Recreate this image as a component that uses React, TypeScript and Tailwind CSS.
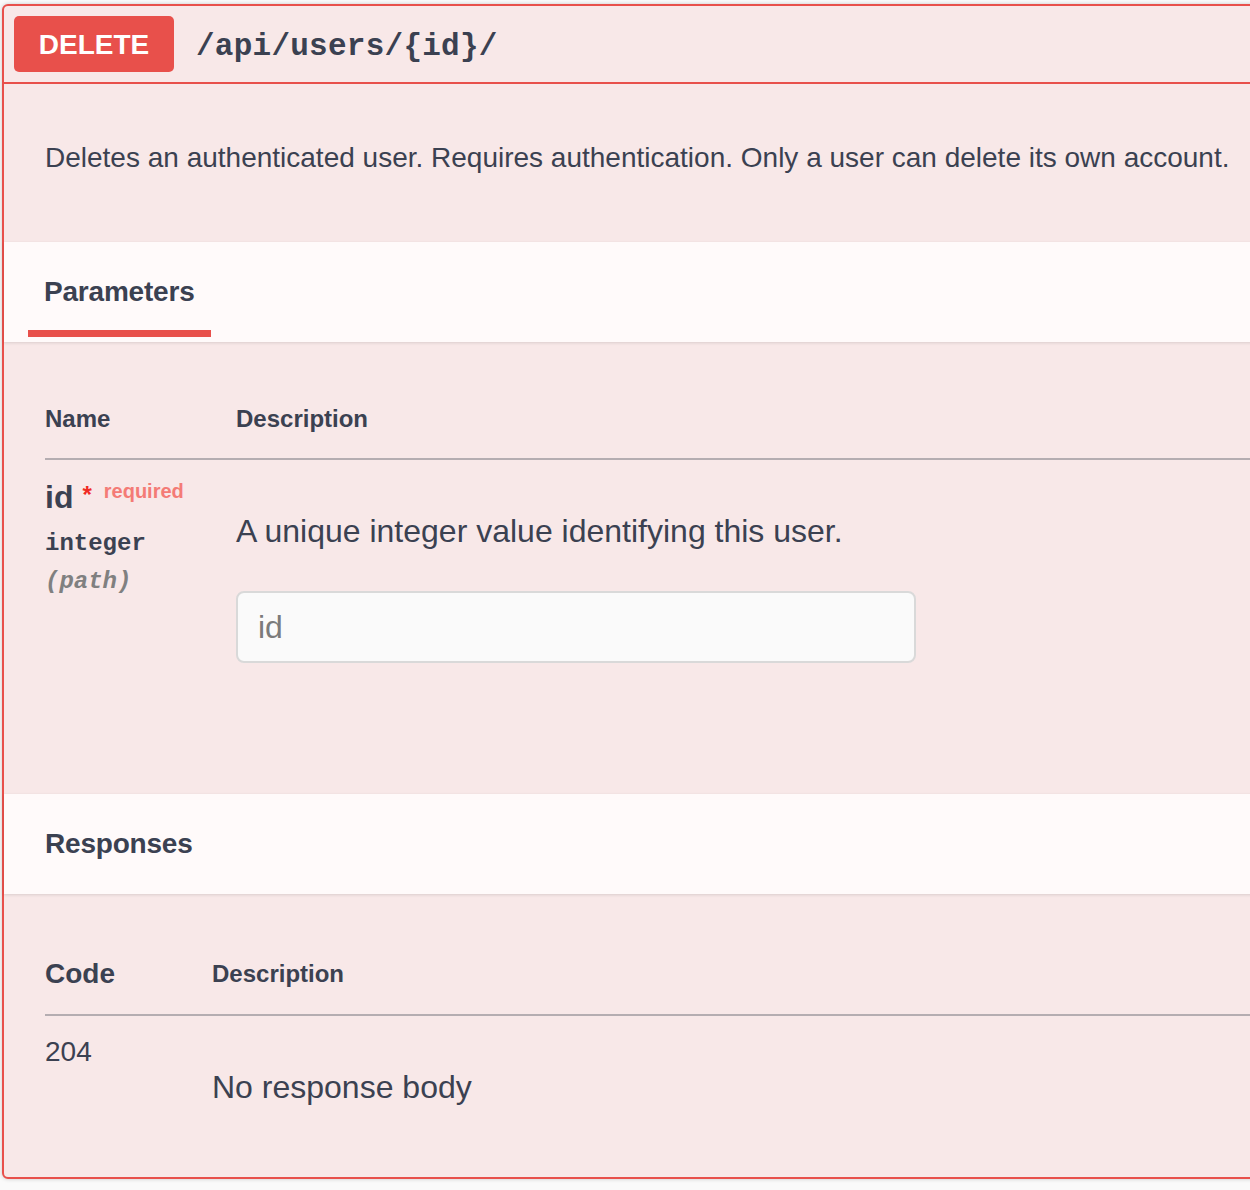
import React from 'react';

const sans = "font-['Liberation_Sans',Arial,sans-serif]";
const mono = "font-['Liberation_Mono','Courier_New',monospace]";

const SectionBar = ({ title, tab }: { title: string; tab?: boolean }) => (
  <div className="h-[100px] bg-[#fffafa] shadow-[0_1px_3px_rgba(0,0,0,0.12)] flex items-stretch">
    {tab ? (
      <div className="ml-[24px] flex flex-col justify-end pb-[5px]">
        <div className="px-[16px] text-[28px] leading-[40px] font-bold text-[#3b4151] mb-[18px] tracking-[-0.2px]">{title}</div>
        <div className="h-[7px] bg-[#e8504b]" />
      </div>
    ) : (
      <div className="pl-[41px] flex items-center text-[28px] leading-[40px] font-bold text-[#3b4151] tracking-[-0.2px]">{title}</div>
    )}
  </div>
);

const App = () => {
  return (
    <div className={`w-[1250px] h-[1190px] overflow-hidden bg-[#fafafa] ${sans}`}>
      <div className="mt-[4px] ml-[2px] w-[1300px] border-2 border-[#e8504b] rounded-[6px] bg-[#f8e8e8] shadow-[0_0_4px_rgba(0,0,0,0.2)] text-[#3b4151]">
        {/* summary */}
        <div className="h-[78px] border-b-2 border-[#e8504b] flex items-center pl-[10px]">
          <div className="w-[160px] h-[56px] rounded-[5px] bg-[#e8504b] flex items-center justify-center text-white font-bold text-[28px] pt-[2px]">
            DELETE
          </div>
          <div className={`ml-[22px] mt-[6px] text-[31px] font-bold tracking-[0.25px] ${mono}`}>/api/users/&#123;id&#125;/</div>
        </div>

        {/* description */}
        <div className="h-[158px] pt-[54px] pl-[41px]">
          <p className="text-[28px] leading-[40px]">
            Deletes an authenticated user. Requires authentication. Only a user can delete its own account.
          </p>
        </div>

        <SectionBar title="Parameters" tab />

        <div className="pt-[57px] pl-[41px] pb-[131px]">
          <div className="h-[61px] border-b-2 border-[#b5adb1] flex text-[24px] leading-[40px] font-bold">
            <div className="w-[191px]">Name</div>
            <div>Description</div>
          </div>
          <div className="flex">
            <div className="w-[191px] pt-[17px]">
              <div className="flex items-start">
                <span className="text-[32px] leading-[40px] font-bold">id</span>
                <span className="ml-[9px] mt-[4px] text-[24px] leading-[28px] font-bold text-[#f02a24]">*</span>
                <span className="ml-[12px] mt-[2px] text-[20px] leading-[24px] font-bold text-[#f47b76]">required</span>
              </div>
              <div className={`mt-[11px] text-[24px] leading-[32px] font-bold ${mono}`}>integer</div>
              <div className={`mt-[6px] text-[24px] leading-[32px] font-bold italic text-[#808080] ${mono}`}>(path)</div>
            </div>
            <div className="pt-[51px]">
              <p className="text-[32px] leading-[40px]">A unique integer value identifying this user.</p>
              <input
                placeholder="id"
                className="mt-[40px] w-[680px] h-[72px] px-[20px] rounded-[8px] border-2 border-[#d9d9d9] bg-[#fafafa] text-[32px] placeholder:text-[#7b7b7b] outline-none"
              />
            </div>
          </div>
        </div>

        <SectionBar title="Responses" />

        <div className="pt-[60px] pl-[41px] pb-[70px]">
          <div className="h-[62px] border-b-2 border-[#b5adb1] flex font-bold leading-[40px]">
            <div className="w-[167px] text-[28px]">Code</div>
            <div className="text-[24px]">Description</div>
          </div>
          <div className="flex">
            <div className="w-[167px] pt-[16px] text-[28px] leading-[40px]">204</div>
            <div className="pt-[51px] text-[32px] leading-[40px]">No response body</div>
          </div>
        </div>
      </div>
    </div>
  );
};

export default App;
